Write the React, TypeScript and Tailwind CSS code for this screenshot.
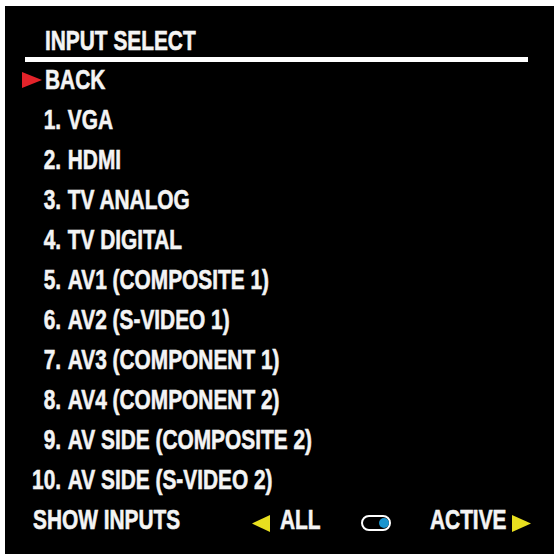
import React from 'react';

interface SourceItem {
    num: string;
    label: string;
}

const SOURCES: SourceItem[] = [
    { num: '1.', label: 'VGA' },
    { num: '2.', label: 'HDMI' },
    { num: '3.', label: 'TV ANALOG' },
    { num: '4.', label: 'TV DIGITAL' },
    { num: '5.', label: 'AV1 (COMPOSITE 1)' },
    { num: '6.', label: 'AV2 (S-VIDEO 1)' },
    { num: '7.', label: 'AV3 (COMPONENT 1)' },
    { num: '8.', label: 'AV4 (COMPONENT 2)' },
    { num: '9.', label: 'AV SIDE (COMPOSITE 2)' },
    { num: '10.', label: 'AV SIDE (S-VIDEO 2)' },
];

// Condensed OSD lettering: Arial-metric bold squeezed horizontally
const Squeeze: React.FC<{ children: React.ReactNode; className?: string }> = ({ children, className }) => (
    <span className={`block origin-left scale-x-[0.745] whitespace-nowrap ${className ?? ''}`}>{children}</span>
);

// Small filled arrow used for the cursor and the left/right hints
const Arrow: React.FC<{ dir: 'left' | 'right'; color: string; className?: string }> = ({ dir, color, className }) => (
    <svg viewBox="0 0 20 17" preserveAspectRatio="none" className={`block shrink-0 ${className ?? ''}`}>
        {dir === 'right' ? (
            <polygon points="0,0 20,8.5 0,17" fill={color} />
        ) : (
            <polygon points="20,0 0,8.5 20,17" fill={color} />
        )}
    </svg>
);

const App: React.FC = () => {
    return (
        <div className="w-[559px] h-[559px] bg-white pt-[6px] pl-[5px]">
            <div className="w-[549px] h-[548px] bg-black text-[#f4f4f4] font-['Liberation_Sans',Arial,sans-serif] font-bold text-[28px] leading-[28px] [-webkit-text-stroke:0.6px_#f4f4f4] pt-[21px]">
                {/* Menu title */}
                <div className="h-[28px] pl-[40px]">
                    <Squeeze>INPUT SELECT</Squeeze>
                </div>
                <div className="mt-[2px] ml-[20px] w-[503px] h-[5px] bg-white" />

                <div className="mt-[4px] flex flex-col gap-[12px]">
                    {/* Back, currently highlighted */}
                    <div className="h-[28px] flex items-center pl-[17px]">
                        <Arrow dir="right" color="#e3232a" className="w-[20px] h-[16px] mr-[3px]" />
                        <Squeeze>BACK</Squeeze>
                    </div>

                    {SOURCES.map((s) => (
                        <div key={s.num} className="h-[28px] pl-[27px]">
                            <Squeeze className="flex">
                                <span className="w-[39px] text-right">{s.num}</span>
                                <span className="ml-[9px]">{s.label}</span>
                            </Squeeze>
                        </div>
                    ))}

                    {/* Input filter */}
                    <div className="h-[28px] flex items-center pl-[28px]">
                        <div className="w-[219px] shrink-0">
                            <Squeeze>SHOW INPUTS</Squeeze>
                        </div>
                        <Arrow dir="left" color="#e8df1f" className="w-[18px] h-[17px] mt-[6px]" />
                        <div className="ml-[10px] w-[81px] shrink-0">
                            <Squeeze>ALL</Squeeze>
                        </div>
                        <div className="w-[30px] h-[16px] mt-[6px] shrink-0 rounded-full border-[2.5px] border-white flex items-center justify-end pr-[0.5px]">
                            <div className="w-[10px] h-[10px] rounded-full bg-[#1b95cf]" />
                        </div>
                        <div className="ml-[39px] w-[74px] shrink-0">
                            <Squeeze>ACTIVE</Squeeze>
                        </div>
                        <Arrow dir="right" color="#e8df1f" className="w-[19px] h-[17px] ml-[8px] mt-[6px]" />
                    </div>
                </div>
            </div>
        </div>
    );
};

export default App;
